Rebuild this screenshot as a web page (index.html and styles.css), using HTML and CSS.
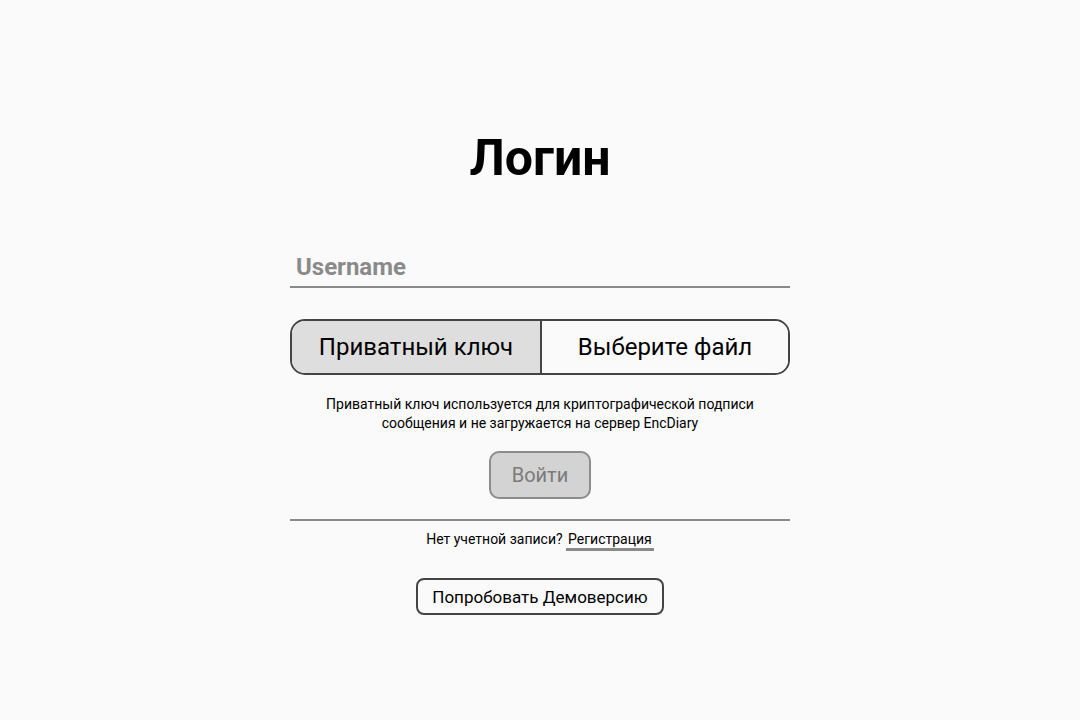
FILE: index.html
```html
<!DOCTYPE html>
<html lang="ru">
<head>
<meta charset="utf-8">
<title>Логин</title>
<link rel="stylesheet" href="styles.css">
</head>
<body>
<main class="page">
  <h1 class="title">Логин</h1>
  <form class="form">
    <input class="username" type="text" placeholder="Username">
    <div class="keypicker">
      <div class="keypicker-label">Приватный ключ</div>
      <div class="keypicker-file">Выберите файл</div>
    </div>
    <p class="hint">Приватный ключ используется для криптографической подписи<br>сообщения и не загружается на сервер EncDiary</p>
    <button class="submit" type="button" disabled>Войти</button>
    <hr class="divider">
    <p class="register">Нет учетной записи? <a class="register-link">Регистрация</a></p>
    <button class="demo" type="button">Попробовать Демоверсию</button>
  </form>
</main>
</body>
</html>
```
FILE: styles.css
```css
html, body {
  margin: 0;
  padding: 0;
  background: #fafafa;
  font-family: Roboto, "Noto Sans", sans-serif;
  color: #000;
}
.page {
  display: flex;
  flex-direction: column;
  align-items: center;
  padding-top: 130px;
}
.title {
  margin: 0;
  font-size: 50px;
  font-weight: 700;
  line-height: 56px;
}
.form {
  width: 500px;
  display: flex;
  flex-direction: column;
  align-items: center;
  margin-top: 62px;
}
.username {
  box-sizing: border-box;
  width: 100%;
  height: 40px;
  border: none;
  border-bottom: 2px solid #8a8a8a;
  background: transparent;
  padding: 0 6px;
  font-family: inherit;
  font-size: 24px;
  font-weight: 700;
  outline: none;
}
.username::placeholder {
  color: #8a8a8a;
}
.keypicker {
  box-sizing: border-box;
  margin-top: 31px;
  width: 100%;
  height: 56px;
  border: 2px solid #444;
  border-radius: 15px;
  display: flex;
  overflow: hidden;
  font-size: 24px;
}
.keypicker-label {
  width: 248px;
  background: #dedede;
  border-right: 2px solid #444;
  display: flex;
  align-items: center;
  justify-content: center;
}
.keypicker-file {
  flex: 1;
  background: #fafafa;
  display: flex;
  align-items: center;
  justify-content: center;
}
.hint {
  margin: 20px 0 0;
  font-size: 14px;
  line-height: 19px;
  text-align: center;
}
.submit {
  margin-top: 18px;
  box-sizing: border-box;
  width: 102px;
  height: 48px;
  border: 2px solid #8c8c8c;
  border-radius: 10px;
  background: #d3d3d3;
  color: #7a7a7a;
  font-family: inherit;
  font-size: 20px;
  padding: 0;
}
.divider {
  width: 100%;
  margin: 20px 0 0;
  border: none;
  border-top: 2px solid #8a8a8a;
  height: 0;
}
.register {
  margin: 8px 0 0;
  font-size: 14px;
  line-height: 20px;
}
.register-link {
  display: inline-block;
  padding: 0 2px;
  line-height: 17px;
  border-bottom: 3px solid #8a8a8a;
  color: #000;
}
.demo {
  margin-top: 27px;
  box-sizing: border-box;
  width: 248px;
  height: 37px;
  border: 2px solid #444;
  border-radius: 8px;
  background: #fafafa;
  color: #000;
  font-family: inherit;
  font-size: 17px;
  padding: 0;
}
```
